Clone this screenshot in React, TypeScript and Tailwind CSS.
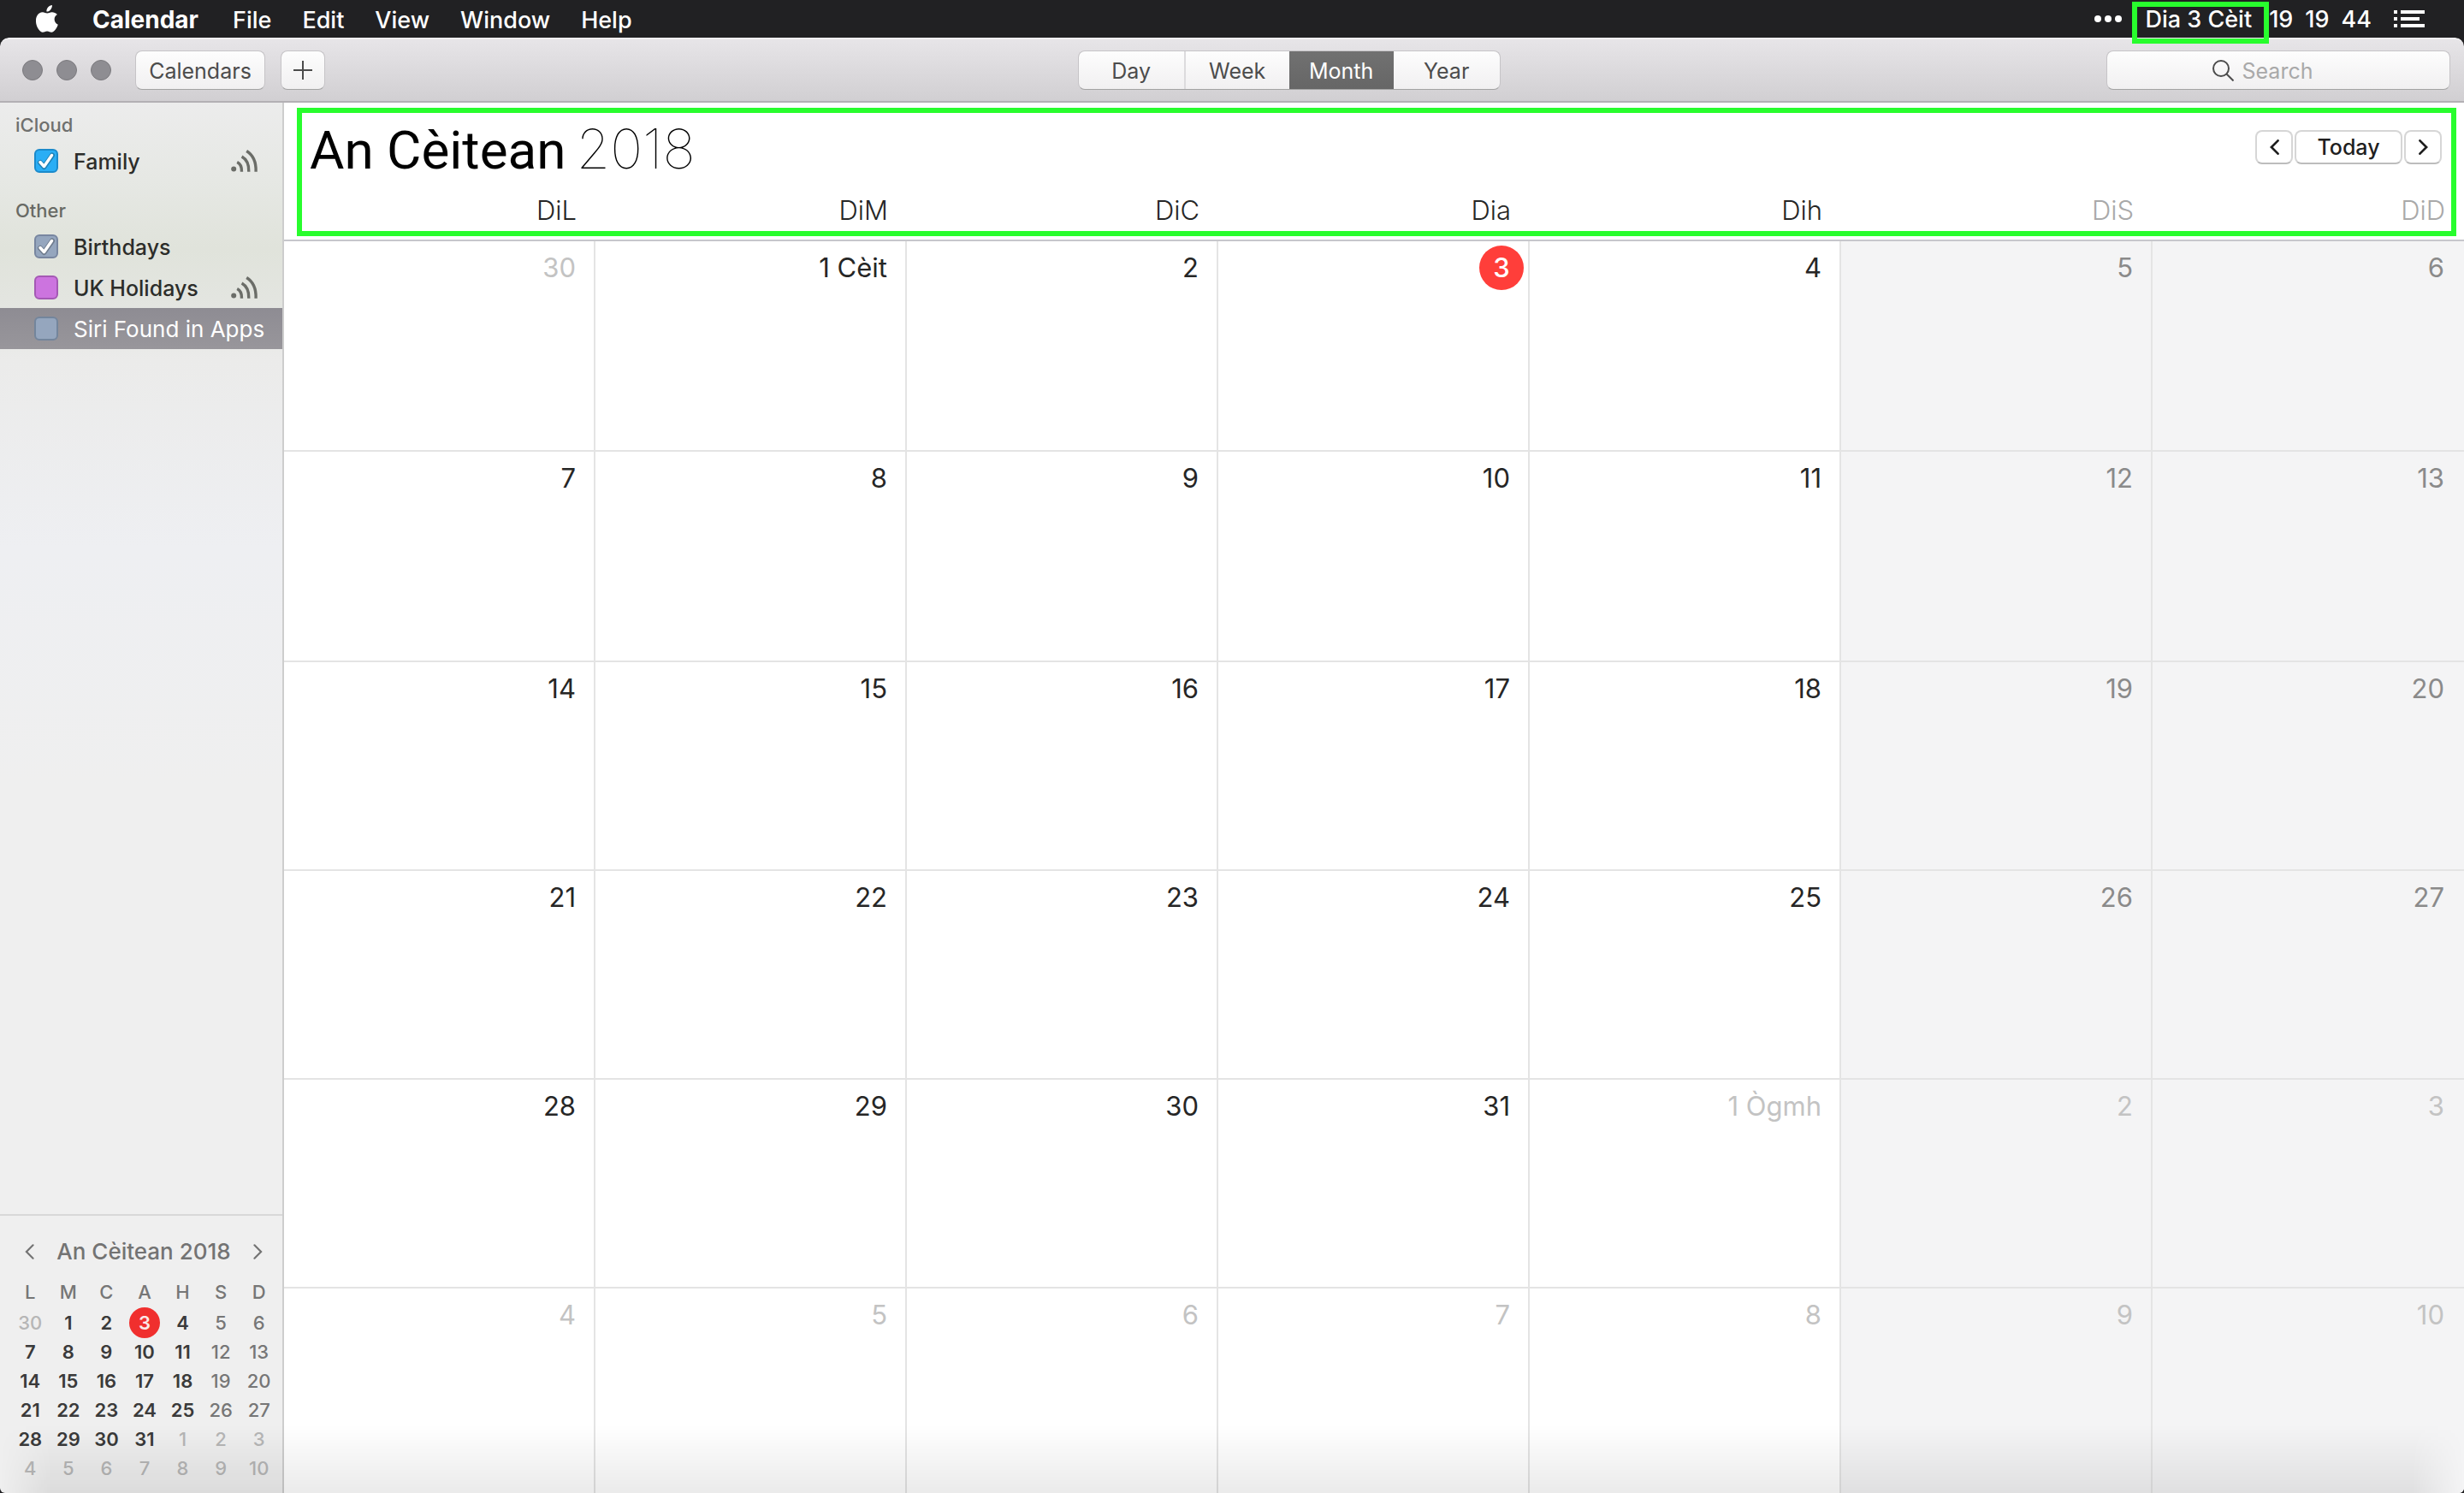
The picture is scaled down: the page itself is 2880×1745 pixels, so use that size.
import React from "react";

type Tone = "normal" | "weekend" | "outside";
type Day = { label: string; n: number; tone: Tone; today: boolean };

const WEEKDAYS = ["DiL", "DiM", "DiC", "Dia", "Dih", "DiS", "DiD"];
const INITIALS = ["L", "M", "C", "A", "H", "S", "D"];

const WEEKS: Day[][] = Array.from({ length: 6 }, (_, w) =>
  Array.from({ length: 7 }, (_, d) => {
    const i = w * 7 + d;
    const n = i === 0 ? 30 : i <= 31 ? i : i - 31;
    const outside = i === 0 || i > 31;
    const label = i === 1 ? "1 Cèit" : i === 32 ? "1 Ògmh" : String(n);
    return { label, n, tone: outside ? "outside" : d > 4 ? "weekend" : "normal", today: i === 3 };
  }),
);

const DAY_TONE: Record<Tone, string> = {
  normal: "text-[#262626]",
  weekend: "text-[#8a8a8a]",
  outside: "text-[#c3c3c3]",
};

const MINI_TONE: Record<Tone, string> = {
  normal: "text-[#3a3a3a]",
  weekend: "text-[#767676]",
  outside: "text-[#b6b6b6]",
};

const RAISED =
  "border border-[#c6c4c7] border-b-[#a3a3a3] bg-linear-to-b from-[#fdfdfd] to-[#f1f0f1] text-[#4c4c4c]";

function AppleLogo() {
  return (
    <svg viewBox="0 0 26 32" className="h-8 w-[26px]" fill="#fff" aria-hidden="true">
      <path d="M18.9 0c.2 1.9-.6 3.800-1.700 5.200-1.200 1.400-3 2.500-4.800 2.300-.2-1.800.7-3.700 1.700-4.900C15.300 1.100 17.300.1 18.900 0z" />
      <path d="M24.900 10.900c-2 1.200-3.300 3.100-3.300 5.600 0 2.900 1.700 5.200 4.200 6.200-.5 1.700-1.300 3.300-2.300 4.800-1.400 2.100-2.900 4.100-5.100 4.200-2.200 0-2.900-1.300-5.300-1.300-2.500 0-3.300 1.300-5.300 1.300-2.200.1-3.800-2.200-5.200-4.200C-.2 23.300-1.200 16 1.700 11.800c1.400-2.200 3.700-3.500 6-3.500 2.300 0 3.700 1.300 5.500 1.300 1.800 0 2.900-1.300 5.600-1.300 2.100 0 4.500 1 6.100 2.600z" />
    </svg>
  );
}

function Chevron({ dir, className }: { dir: "left" | "right"; className: string }) {
  return (
    <svg viewBox="0 0 12 20" className={className} fill="none" stroke="currentColor" aria-hidden="true">
      <path d={dir === "left" ? "M10.500 1.500 2 10l8.500 8.500" : "M1.500 1.500 10 10l-8.500 8.500"} strokeLinecap="round" />
    </svg>
  );
}

function Broadcast() {
  return (
    <svg viewBox="0 0 32 26" className="h-[26px] w-8" fill="none" stroke="#6b6d68" strokeWidth="3.400" aria-hidden="true">
      <circle cx="3.200" cy="22.500" r="3" fill="#6b6d68" stroke="none" />
      <path d="M7.200 14.500c3.200 1.500 5.500 5 5.300 11.200M12.600 8c5.400 3 8.500 9 8.200 17.700M18.200 1.500c7.200 4.400 11.300 13 10.900 24.200" />
    </svg>
  );
}

function MenuBar() {
  return (
    <header className="flex h-11 shrink-0 items-center bg-[#212123] pr-[46px] pl-[42px] text-[27px] leading-8 font-medium text-white">
      <AppleLogo />
      <nav className="flex items-baseline pt-0.5 pl-10">
        <button className="pr-10 text-[28px] font-bold">Calendar</button>
        {["File", "Edit", "View", "Window", "Help"].map((m) => (
          <button key={m} className="pr-9">
            {m}
          </button>
        ))}
      </nav>
      <div className="ml-auto flex items-center">
        <svg viewBox="0 0 32 8" className="h-2 w-8" fill="#fff" aria-hidden="true">
          <circle cx="4" cy="4" r="4" />
          <circle cx="16" cy="4" r="4" />
          <circle cx="28" cy="4" r="4" />
        </svg>
        <div className="flex pt-0.5 pl-7">
          <span className="relative pr-5">
            Dia 3 Cèit
            <span className="absolute -top-[5px] right-0 -left-4 z-10 h-[49px] border-6 border-[#28fd2d]" />
          </span>
          <span className="flex gap-3.5">
            <span>19</span>
            <span>19</span>
            <span>44</span>
          </span>
        </div>
        <svg viewBox="0 0 36 20" className="ml-[26px] h-5 w-9" fill="#fff" aria-hidden="true">
          <path d="M0 0h4v4H0zM8 0h28v4H8zM0 8h4v4H0zM8 8h22v4H8zM0 16h4v4H0zM8 16h28v4H8z" />
        </svg>
      </div>
    </header>
  );
}

function Toolbar() {
  return (
    <div className="grid h-[76px] shrink-0 grid-cols-[10fr_auto_9fr] items-center rounded-t-[10px] border-t-2 border-b-2 border-t-[#f1f0f2] border-b-[#b3b0b4] bg-linear-to-b from-[#e7e5e8] to-[#d1cfd2] pr-4 pl-[26px] text-[25px] leading-8">
      <div className="flex items-center">
        <div className="flex gap-4 pr-7">
          {["Close", "Minimise", "Zoom"].map((l) => (
            <button key={l} aria-label={l} className="size-6 rounded-full border border-[#7b7a7e] bg-[#8e8d92]" />
          ))}
        </div>
        <button className={`h-[46px] w-[152px] rounded-lg pt-0.5 ${RAISED}`}>Calendars</button>
        <button aria-label="Add" className={`ml-[18px] flex h-[46px] w-[52px] items-center justify-center rounded-lg ${RAISED}`}>
          <svg viewBox="0 0 22 22" className="size-[22px]" stroke="currentColor" strokeWidth="2" aria-hidden="true">
            <path d="M11 0v22M0 11h22" />
          </svg>
        </button>
      </div>
      <div className={`flex h-[46px] overflow-hidden rounded-lg ${RAISED}`}>
        <button className="w-[125px] border-r-2 border-[#dcdbdd] pt-0.5">Day</button>
        <button className="w-[121px] pt-0.5">Week</button>
        <button className="w-[122px] bg-linear-to-b from-[#717171] to-[#666666] pt-0.5 text-white">Month</button>
        <button className="w-[124px] pt-0.5">Year</button>
      </div>
      <label className={`ml-auto flex h-[46px] w-[402px] items-center justify-center gap-2.5 rounded-lg pr-2 ${RAISED}`}>
        <svg viewBox="0 0 25 25" className="size-[25px]" fill="none" stroke="currentColor" strokeWidth="2" aria-hidden="true">
          <circle cx="10" cy="10" r="9" />
          <path d="m16.500 16.500 8 8" />
        </svg>
        <input
          type="text"
          role="searchbox"
          placeholder="Search"
          aria-label="Search"
          className="w-[112px] bg-transparent pt-0.5 outline-none placeholder:text-[#a9a9a9]"
        />
      </label>
    </div>
  );
}

function CalendarItem({
  name,
  box,
  checked = false,
  shared = false,
  selected = false,
}: {
  name: string;
  box: string;
  checked?: boolean;
  shared?: boolean;
  selected?: boolean;
}) {
  return (
    <li
      className={
        selected
          ? "flex h-12 items-center bg-linear-to-b from-[#8e8c93] to-[#98969b] pr-7 pl-10 text-[26px] text-white"
          : "flex h-12 items-center pr-7 pl-10 font-medium text-[#2c2d2a]"
      }
    >
      <label className="flex items-center gap-[18px] whitespace-nowrap">
        <span className="grid">
          <input
            type="checkbox"
            defaultChecked={checked}
            className={`peer col-start-1 row-start-1 size-7 appearance-none rounded-md border-2 ${box}`}
          />
          <svg
            viewBox="0 0 28 28"
            className="pointer-events-none invisible col-start-1 row-start-1 size-7 peer-checked:visible"
            fill="none"
            strokeLinecap="round"
            strokeLinejoin="round"
            aria-hidden="true"
          >
            <path d="m7 16 4.500 5L21 7.500" stroke="#00000040" strokeWidth="6" />
            <path d="m7 15.500 4.500 5L20.500 7.500" stroke="#fff" strokeWidth="3.500" />
          </svg>
        </span>
        <span className="pt-0.5">{name}</span>
      </label>
      {shared && (
        <span className="ml-auto">
          <Broadcast />
        </span>
      )}
    </li>
  );
}

function MiniCalendar() {
  return (
    <section className="border-t-2 border-[#d8d8d8] pt-6 pr-[5px] pb-3 pl-[13px]">
      <div className="flex h-9 items-center justify-between pr-[18px] pl-4 text-[#737373]">
        <button aria-label="Previous month">
          <Chevron dir="left" className="h-[18px] w-[11px] stroke-[2.400]" />
        </button>
        <h2 className="text-[26px] leading-9 font-medium">An Cèitean 2018</h2>
        <button aria-label="Next month">
          <Chevron dir="right" className="h-[18px] w-[11px] stroke-[2.400]" />
        </button>
      </div>
      <table className="mt-2.5 w-full table-fixed text-center text-[22px] leading-[34px]">
        <thead>
          <tr className="text-[#767676]">
            {INITIALS.map((d) => (
              <th key={d} className="h-[38px] p-0 font-medium">
                {d}
              </th>
            ))}
          </tr>
        </thead>
        <tbody>
          {WEEKS.map((week, w) => (
            <tr key={w}>
              {week.map((day, d) => (
                <td key={d} className={`h-[34px] p-0 ${day.tone === "normal" ? "font-semibold" : "font-medium"} ${MINI_TONE[day.tone]}`}>
                  {day.today ? (
                    <span className="mx-auto -my-px block size-9 rounded-full bg-[#f02f2e] leading-9 text-[#fbe9e8]">{day.n}</span>
                  ) : (
                    day.n
                  )}
                </td>
              ))}
            </tr>
          ))}
        </tbody>
      </table>
    </section>
  );
}

function Sidebar() {
  return (
    <aside className="flex w-[332px] shrink-0 flex-col border-r-2 border-[#cdcdcd] bg-[linear-gradient(to_bottom,#ececec_0px,#e6e8e4_90px,#e0e3db_170px,#e3e5e0_230px,#ebebea_300px,#eeeff2_520px,#efefef_800px)] text-[25px] leading-8">
      <h2 className="pt-2.5 pl-[18px] text-[22px] font-medium text-[#6f706e]">iCloud</h2>
      <ul className="pt-0.5">
        <CalendarItem name="Family" box="border-[#1b8acb] bg-[#2aaef5]" checked shared />
      </ul>
      <h2 className="pt-[18px] pl-[18px] text-[22px] font-medium text-[#686a65]">Other</h2>
      <ul className="pt-0.5">
        <CalendarItem name="Birthdays" box="border-[#7886a0] bg-[#95a6be]" checked />
        <CalendarItem name="UK Holidays" box="border-[#a459b4] bg-[#cc74df]" shared />
        <CalendarItem name="Siri Found in Apps" box="border-[#73859c] bg-[#95a6be]" selected />
      </ul>
      <div className="flex-1" />
      <MiniCalendar />
    </aside>
  );
}

function MonthView() {
  const nav =
    "flex h-10 items-center justify-center rounded-lg border-2 border-[#d6d6d6] border-b-[#bdbdbd] bg-white text-[#1f1f1f]";
  return (
    <main className="relative flex min-w-0 flex-1 flex-col bg-white">
      <div className="pointer-events-none absolute top-1.5 right-[9px] left-[15px] z-10 h-[150px] border-6 border-[#28fd2d]" />
      <div className="flex h-[100px] items-center justify-between pt-2.5 pr-[26px] pl-[30px]">
        <h1 className="flex items-baseline gap-3 text-[62px] leading-[72px] whitespace-nowrap text-black">
          <span className="font-['Roboto','Inter',sans-serif]">An Cèitean</span>
          <span className="text-[64px] font-thin">2018</span>
        </h1>
        <div className="flex gap-0.5 pb-1.5 text-[25px] leading-8 font-medium">
          <button aria-label="Previous month" className={`w-11 ${nav}`}>
            <Chevron dir="left" className="h-[18px] w-[11px] stroke-[3]" />
          </button>
          <button className={`w-[126px] ${nav}`}>Today</button>
          <button aria-label="Next month" className={`w-11 ${nav}`}>
            <Chevron dir="right" className="h-[18px] w-[11px] stroke-[3]" />
          </button>
        </div>
      </div>
      <table className="flex min-h-0 flex-1 flex-col text-right text-[31px] leading-10">
        <thead className="block">
          <tr className="grid grid-cols-7 border-b-2 border-[#c7c7cc]">
            {WEEKDAYS.map((d, i) => (
              <th
                key={d}
                className={`pt-1.5 pr-[22px] pb-3.5 text-right font-light ${i > 4 ? "text-[#a9a9a9]" : "text-[#262626]"}`}
              >
                {d}
              </th>
            ))}
          </tr>
        </thead>
        <tbody className="grid min-h-0 flex-1 grid-rows-[246fr_246fr_244fr_244fr_244fr_239fr]">
          {WEEKS.map((week, w) => (
            <tr key={w} className="grid grid-cols-7 border-[#e4e4e4] not-last:border-b-2">
              {week.map((day, d) => (
                <td
                  key={d}
                  className={`border-[#e4e4e4] pt-[11px] pr-[21px] not-last:border-r-2 last:pr-[23px] ${d > 4 ? "bg-[#f4f4f5]" : ""} ${DAY_TONE[day.tone]}`}
                >
                  {day.today ? (
                    <span className="-mt-1.5 -mr-4 ml-auto block size-[52px] rounded-full bg-[#ff3e3a] text-center leading-[52px] font-medium text-white">
                      {day.label}
                    </span>
                  ) : (
                    day.label
                  )}
                </td>
              ))}
            </tr>
          ))}
        </tbody>
      </table>
    </main>
  );
}

export default function App() {
  return (
    <div className="flex h-screen flex-col overflow-hidden bg-[#212123] font-['Inter','Liberation_Sans',sans-serif]">
      <MenuBar />
      <div className="relative flex min-h-0 flex-1 flex-col overflow-hidden rounded-t-[10px] rounded-b-[6px]">
        <Toolbar />
        <div className="flex min-h-0 flex-1">
          <Sidebar />
          <MonthView />
        </div>
        <div className="pointer-events-none absolute inset-x-0 bottom-0 h-20 bg-linear-to-b from-transparent to-black/8 [mask-image:linear-gradient(to_right,transparent,black_60px,black_calc(100%-60px),transparent)]" />
      </div>
    </div>
  );
}
